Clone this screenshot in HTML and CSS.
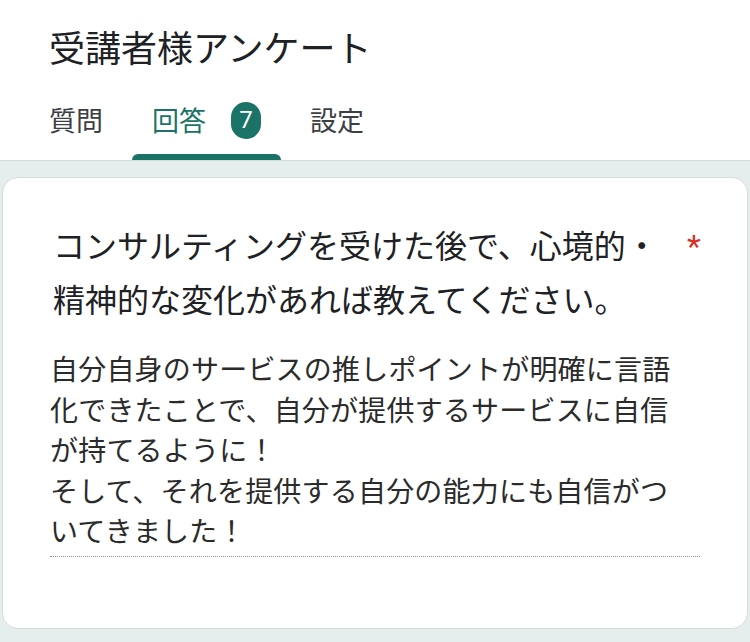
FILE: index.html
```html
<!DOCTYPE html>
<html lang="ja">
<head>
    <meta charset="UTF-8">
    <meta name="viewport" content="width=device-width, initial-scale=1.0">
    <title>受講者様アンケート</title>
    <link rel="stylesheet" href="styles.css">
</head>
<body>
    <header class="header">
        <h1 class="form-title">受講者様アンケート</h1>
        <nav class="tabs">
            <div class="tab">質問</div>
            <div class="tab tab-active">回答<span class="badge">7</span></div>
            <div class="tab">設定</div>
        </nav>
    </header>

    <main class="content">
        <section class="card">
            <div class="question">
                <p class="question-text">コンサルティングを受けた後で、心境的・精神的な変化があれば教えてください。</p>
                <span class="required">*</span>
            </div>
            <div class="answer">
                <p class="answer-text">自分自身のサービスの推しポイントが明確に言語化できたことで、自分が提供するサービスに自信が持てるように！<br>そして、それを提供する自分の能力にも自信がついてきました！</p>
            </div>
        </section>
    </main>
</body>
</html>
```

FILE: styles.css
```css
/* Basic reset */
* {
    box-sizing: border-box;
    margin: 0;
    padding: 0;
}

body {
    font-family: "Noto Sans CJK JP", "Noto Sans", sans-serif;
    background: #e6eeed;
    color: #202124;
    min-height: 100vh;
}

/* Header with title and tabs */
.header {
    background: white;
    border-bottom: 1px solid #d3dbda;
}

.form-title {
    font-size: 36px;
    font-weight: 400;
    line-height: 48px;
    padding: 22px 0 0 49px;
    color: #202124;
}

.tabs {
    display: flex;
    gap: 9px;
    padding: 30px 0 0 29px;
}

.tab {
    position: relative;
    display: flex;
    align-items: center;
    padding: 0 20px 20px;
    font-size: 27px;
    line-height: 40px;
    color: #3c4043;
}

.tab-active {
    color: #1a7366;
}

/* Active tab indicator */
.tab-active::after {
    content: "";
    position: absolute;
    left: 0;
    right: 0;
    bottom: 0;
    height: 6px;
    border-radius: 6px 6px 0 0;
    background: #1a7366;
}

.badge {
    display: inline-flex;
    align-items: center;
    justify-content: center;
    width: 30px;
    height: 37px;
    margin-left: 25px;
    border-radius: 15px;
    background: #1a7366;
    color: white;
    font-family: Roboto, "Noto Sans", sans-serif;
    font-size: 24px;
}

/* Response card */
.content {
    padding: 16px 2px 14px;
}

.card {
    background: white;
    border: 1px solid #d6dcdb;
    border-radius: 16px;
    padding: 39px 0 60px 47px;
    min-height: 452px;
}

.question {
    display: flex;
    align-items: flex-start;
    padding-left: 3px;
}

.question-text {
    width: 620px;
    font-size: 32px;
    line-height: 54px;
    color: #202124;
}

.required {
    margin-left: 14px;
    margin-top: 14px;
    font-family: Roboto, "Noto Sans", sans-serif;
    font-size: 32px;
    line-height: 30px;
    color: #d93025;
}

.answer {
    width: 650px;
    margin-top: 23px;
    padding-right: 20px;
    padding-bottom: 5px;
    border-bottom: 1px dotted #8a8f94;
}

.answer-text {
    font-size: 28px;
    line-height: 40.5px;
    letter-spacing: 0.2px;
    color: #2b2b2b;
}
```
